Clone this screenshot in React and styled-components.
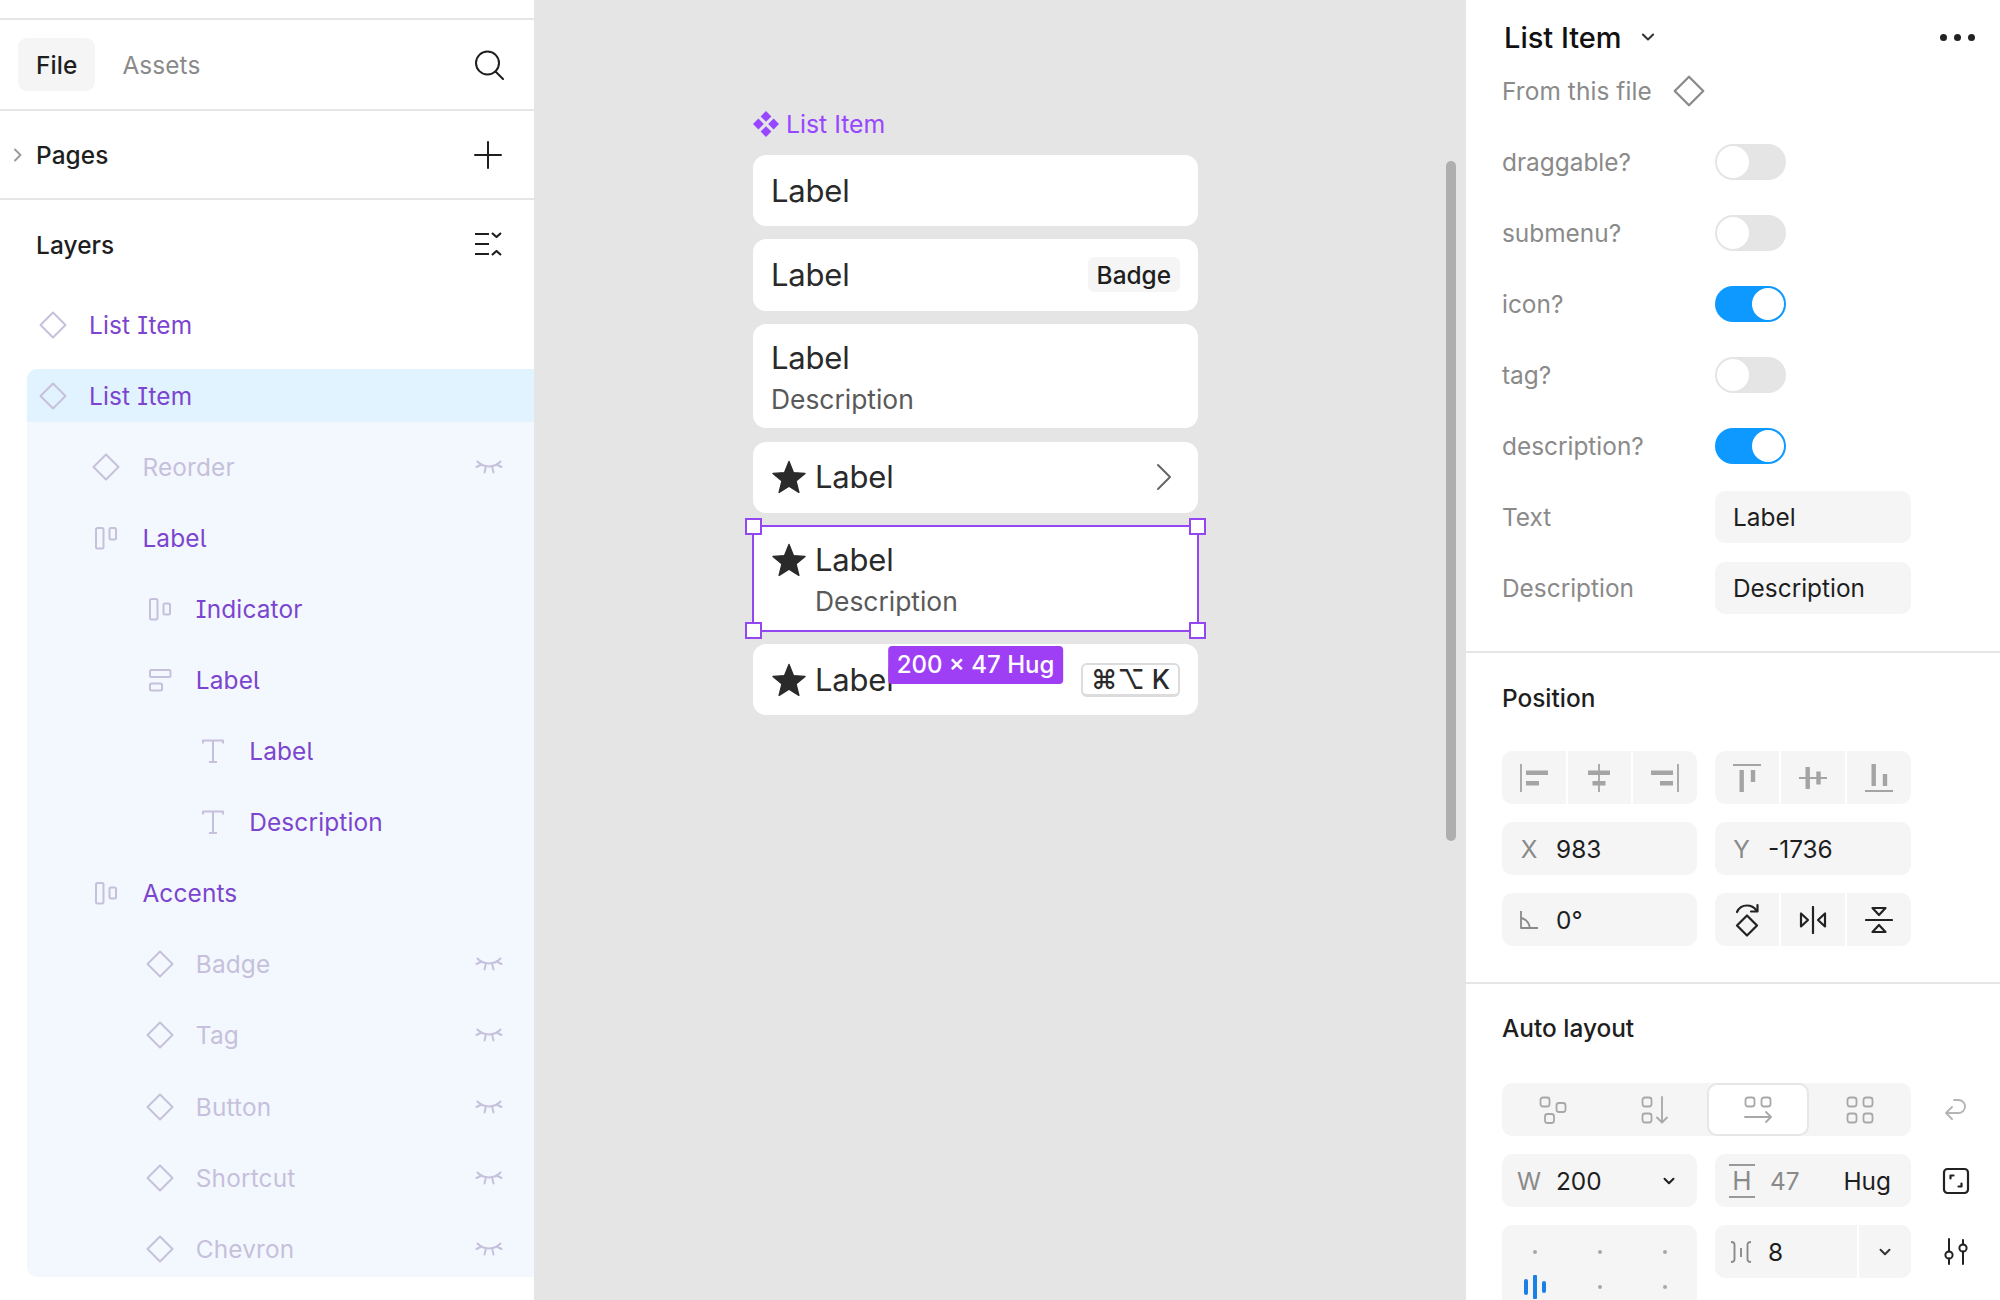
import React from 'react'
import styled, { createGlobalStyle } from 'styled-components'

const GlobalStyle = createGlobalStyle`
  html, body {
    margin: 0;
    padding: 0;
    background: #fff;
  }
  body {
    font-family: Inter, "Liberation Sans", sans-serif;
    -webkit-font-smoothing: antialiased;
  }
`

const Icon = ({ size = 28, h, vb, children, ...rest }) => (
  <svg
    width={size}
    height={h || size}
    viewBox={vb || `0 0 ${size} ${h || size}`}
    fill="none"
    stroke="currentColor"
    strokeWidth="2"
    strokeLinecap="round"
    strokeLinejoin="round"
    style={{ display: 'block', flex: 'none' }}
    {...rest}
  >
    {children}
  </svg>
)

const Diamond = ({ size = 28 }) => (
  <Icon size={28} vb="0 0 28 28" width={size} height={size}>
    <path d="M14 1.5 26.5 14 14 26.5 1.5 14Z" />
  </Icon>
)
const RowFrame = ({ top }) => (
  <Icon size={28} strokeWidth="2">
    <rect x="4" y="4" width="7.5" height="20.5" rx="1.5" />
    <rect x="17.5" y={top ? 4 : 8.5} width="6.5" height={top ? 11.5 : 11} rx="1.5" />
  </Icon>
)
const ColFrame = () => (
  <Icon size={28} strokeWidth="2">
    <rect x="4" y="4" width="20.5" height="7" rx="1.5" />
    <rect x="4" y="17.5" width="12" height="7" rx="1.5" />
  </Icon>
)
const TextIcon = () => (
  <Icon size={28} strokeWidth="2" strokeLinecap="butt">
    <path d="M4 6.5V3.5h20v3M14 3.5v21M10 25h8" />
  </Icon>
)
const EyeClosed = () => (
  <Icon size={28} h={16} strokeWidth="2">
    <path d="M2.5 2.5c6 6.5 17 6.5 23 0" />
    <path d="M1.5 8 6.5 5.5M26.5 8 21.5 5.5M9.5 13.5l1.2-5M18.5 13.5l-1.2-5" />
  </Icon>
)
const Star = () => (
  <svg width="36" height="36" viewBox="0 0 36 36" style={{ display: 'block', flex: 'none' }}>
    <path
      d="M18 2.5 22.4 13.6 34 14.4 25 22 27.9 33.4 18 27.2 8.1 33.4 11 22 2 14.4 13.6 13.6Z"
      fill="#2a2a2a"
      stroke="#2a2a2a"
      strokeWidth="1.4"
      strokeLinejoin="round"
    />
  </svg>
)
const Chevron = ({ size = 12, w = 2 }) => (
  <Icon size={size} strokeWidth={w}>
    <path d={`M${size * 0.18} ${size * 0.34} ${size / 2} ${size * 0.66} ${size * 0.82} ${size * 0.34}`} />
  </Icon>
)

const AlignIcon = ({ kind }) => {
  const thin = {
    left: 'M1 0v28',
    center: 'M14 0v28',
    right: 'M27 0v28',
    top: 'M0 1h28',
    middle: 'M0 14h28',
    bottom: 'M0 27h28',
  }[kind]
  const bars = {
    left: 'M6 8.7h22M6 19.3h13',
    center: 'M3 8.7h22M7.5 19.3h13',
    right: 'M0 8.7h22M9 19.3h13',
    top: 'M8.7 6v22M20 6v12',
    middle: 'M8.7 3v22M19.5 7.5v13',
    bottom: 'M8.7 0v22M20 10v12',
  }[kind]
  return (
    <Icon size={28} strokeLinecap="butt">
      <path d={thin} strokeWidth="1.8" />
      <path d={bars} strokeWidth="4.4" />
    </Icon>
  )
}

const RotateIcon = () => (
  <Icon size={24} h={34} strokeWidth="2.2">
    <path d="M12 12.5 22 22.5 12 32.5 2 22.5Z" />
    <path d="M2 9C4 4.5 7 2.5 12 2.5c4 0 7 1.5 9.5 5" />
    <path d="M22.5 2v6.5H16" />
  </Icon>
)
const FlipH = () => (
  <Icon size={28} strokeWidth="2.2">
    <path d="M14 1v26" />
    <path d="M2 7.5v13L9 14ZM26 7.5v13L19 14Z" />
  </Icon>
)
const FlipV = () => (
  <Icon size={28} strokeWidth="2.2">
    <path d="M1 14h26" />
    <path d="M7.5 2h13L14 9ZM7.5 26h13L14 19Z" />
  </Icon>
)
const AngleIcon = () => (
  <Icon size={20} strokeWidth="1.8" strokeLinecap="butt">
    <path d="M2 1v17h17M2 8c5 1 8 5 9 10" />
  </Icon>
)
const Squares = ({ items, extra }) => (
  <Icon size={28} strokeWidth="1.8">
    {items.map(([x, y], i) => (
      <rect key={i} x={x} y={y} width="9" height="9" rx="2.5" />
    ))}
    {extra && <path d={extra} />}
  </Icon>
)
const ResizeIcon = () => (
  <Icon size={28} strokeWidth="2.2">
    <rect x="2" y="2" width="24" height="24" rx="3.5" />
    <path d="M8.5 11.5V8.5h3M19.5 16.5v3h-3" />
  </Icon>
)
const SlidersIcon = () => (
  <Icon size={28} strokeWidth="2">
    <circle cx="7" cy="17" r="3.6" />
    <circle cx="21" cy="10" r="3.6" />
    <path d="M7 1v12.4M7 20.6V26M21 2v4.4M21 13.6V26" />
  </Icon>
)
const GapIcon = () => (
  <Icon size={24} strokeWidth="1.9" strokeLinecap="butt">
    <path d="M2 2c3 0 3.5 1 3.5 3v14c0 2-.5 3-3.5 3M22 2c-3 0-3.5 1-3.5 3v14c0 2 .5 3 3.5 3M12 8v9" />
  </Icon>
)
const AlignActive = () => (
  <svg width="24" height="24" viewBox="0 0 24 24" style={{ display: 'block' }}>
    <g stroke="#1a80e5" strokeLinecap="round" fill="none">
      <path d="M3 6v12" strokeWidth="4" />
      <path d="M12 1.5v21" strokeWidth="4" />
      <path d="M21 8v8" strokeWidth="4" />
    </g>
  </svg>
)

const Page = styled.div`
  display: grid;
  grid-template-columns: 534px 932px 534px;
  width: 2000px;
  height: 1300px;
  overflow: hidden;
`

/* left panel */
const LeftPanel = styled.aside`
  display: flex;
  flex-direction: column;
  background: #fff;
  font-size: 24.4px;
  color: #1e1e1e;
`
const TopStrip = styled.div`
  height: 18px;
  border-bottom: 2px solid #e6e6e6;
`
const TabsBar = styled.div`
  display: flex;
  align-items: center;
  height: 89px;
  padding: 0 30px 0 18px;
  border-bottom: 2px solid #e6e6e6;
`
const Tab = styled.div`
  display: flex;
  align-items: center;
  height: 53px;
  padding: 0 18px;
  border-radius: 9px;
  font-weight: ${(p) => (p.$active ? 500 : 400)};
  letter-spacing: 0.1px;
  color: ${(p) => (p.$active ? '#1e1e1e' : '#8a8a8a')};
  background: ${(p) => (p.$active ? '#f5f5f5' : 'transparent')};
  margin-right: ${(p) => (p.$active ? '9px' : 0)};
`
const Spacer = styled.div`
  flex: 1;
`
const SectionBar = styled.div`
  display: flex;
  align-items: center;
  height: ${(p) => p.$h}px;
  padding: 0 32px 0 36px;
  font-weight: 500;
  letter-spacing: 0.1px;
  border-bottom: ${(p) => (p.$line ? '2px solid #e6e6e6' : 'none')};
  position: relative;
`
const Caret = styled.span`
  position: absolute;
  left: 11px;
  top: 50%;
  transform: translateY(-50%);
  color: #9a9a9a;
`
const Tree = styled.div`
  display: flex;
  flex-direction: column;
  gap: 18.1px;
  padding: 9px 0 0 27px;
`
const Row = styled.div`
  display: flex;
  align-items: center;
  gap: 22px;
  height: 53px;
  padding-left: ${(p) => 12 + (p.$level || 0) * 53.4}px;
  padding-right: 31px;
  font-feature-settings: 'cv05', 'cv08';
  letter-spacing: 0.15px;
  color: ${(p) => (p.$hidden ? '#c6c0dc' : '#7c45cf')};
  background: ${(p) => (p.$selected ? '#e1f3fe' : 'transparent')};
  border-radius: ${(p) => (p.$selected ? '10px 0 0 0' : 0)};
`
const RowIcon = styled.span`
  color: #c6c0dc;
  flex: none;
`
const RowLabel = styled.span`
  flex: 1;
`
const SelectedGroup = styled.div`
  display: flex;
  flex-direction: column;
  gap: 18.1px;
  padding-bottom: 2px;
  background: #f3f8fe;
  border-radius: 10px 0 0 10px;
`

/* canvas */
const Canvas = styled.main`
  position: relative;
  background: #e5e5e5;
  padding: 108px 0 0 219px;
`
const Scrollbar = styled.div`
  position: absolute;
  left: 912px;
  top: 161px;
  width: 10px;
  height: 680px;
  border-radius: 5px;
  background: #aeaeae;
`
const FrameTitle = styled.div`
  display: flex;
  align-items: center;
  gap: 7px;
  height: 32px;
  margin-bottom: 15px;
  font-size: 24.8px;
  color: #9747ff;
  svg {
    display: block;
  }
`
const CardList = styled.div`
  display: flex;
  flex-direction: column;
  gap: 13.34px;
  width: 445px;
`
const Card = styled.div`
  position: relative;
  z-index: ${(p) => (p.$selected ? 2 : 'auto')};
  display: flex;
  align-items: ${(p) => (p.$tall ? 'flex-start' : 'center')};
  gap: 8px;
  height: ${(p) => (p.$tall ? 104.5 : 71.12)}px;
  padding: ${(p) => (p.$tall ? '12px 18px' : '0 18px')};
  box-sizing: border-box;
  background: #fff;
  border-radius: 13px;
  color: #2a2a2a;
`
const CardText = styled.div`
  display: flex;
  flex-direction: column;
  flex: 1;
`
const CardLabel = styled.div`
  font-size: 31px;
  line-height: 44px;
  letter-spacing: -0.2px;
`
const CardDesc = styled.div`
  font-size: 26.4px;
  line-height: 39px;
  color: #595959;
`
const StarSlot = styled.div`
  padding-top: ${(p) => (p.$tall ? 4 : 0)}px;
`
const Badge = styled.div`
  display: flex;
  align-items: center;
  height: 35px;
  padding: 0 9px;
  border-radius: 6px;
  background: #f5f5f5;
  color: #1e1e1e;
  font-size: 24.4px;
  font-weight: 500;
`
const Shortcut = styled.div`
  display: flex;
  align-items: center;
  height: 34px;
  box-sizing: border-box;
  padding: 0 8px;
  border: 2px solid #dcdcdc;
  border-bottom-width: 3px;
  border-radius: 6px;
  color: #2a2a2a;
  font-size: 26.6px;
  font-weight: 500;
  white-space: nowrap;
  font-family: Inter, "DejaVu Sans", sans-serif;
`
const ChevronRight = styled.span`
  color: #666;
  margin-right: 8px;
`
const SelectionBox = styled.div`
  position: absolute;
  inset: -1px;
  border: 2.4px solid #9447f0;
  pointer-events: none;
`
const Handle = styled.span`
  position: absolute;
  width: 17px;
  height: 17px;
  box-sizing: border-box;
  background: #fff;
  border: 2.4px solid #9447f0;
  left: ${(p) => (p.$right ? 'auto' : '-9px')};
  right: ${(p) => (p.$right ? '-9px' : 'auto')};
  top: ${(p) => (p.$bottom ? 'auto' : '-9px')};
  bottom: ${(p) => (p.$bottom ? '-9px' : 'auto')};
`
const SizeTag = styled.div`
  position: absolute;
  top: calc(100% + 16px);
  left: 50%;
  transform: translateX(-50%);
  display: flex;
  align-items: center;
  height: 38px;
  padding: 0 9px;
  white-space: nowrap;
  border-radius: 4px;
  background: #9f3ff5;
  color: #fff;
  font-size: 24px;
  font-weight: 500;
`

/* right panel */
const RightPanel = styled.aside`
  display: flex;
  flex-direction: column;
  background: #fff;
  font-size: 24.4px;
  color: #1e1e1e;
`
const PropsSection = styled.section`
  padding: 0 35px 37px 36px;
  border-bottom: 2px solid #e6e6e6;
`
const TitleRow = styled.div`
  display: flex;
  align-items: center;
  height: 74px;
  margin-left: 2px;
  margin-right: -10px;
  font-size: 29px;
  font-weight: 500;
  color: #111;
`
const TitleChevron = styled.span`
  margin-left: 18px;
  color: #333;
`
const Dots = styled.div`
  display: flex;
  gap: 7px;
  margin-left: auto;
  span {
    width: 7px;
    height: 7px;
    border-radius: 50%;
    background: #222;
  }
`
const FromRow = styled.div`
  display: flex;
  align-items: center;
  gap: 21px;
  height: 34px;
  margin-bottom: 28px;
  color: #8a8a8a;
  letter-spacing: 0.1px;
`
const PropList = styled.div`
  display: flex;
  flex-direction: column;
  gap: 19px;
`
const PropRow = styled.div`
  display: grid;
  grid-template-columns: 213px 196px;
  align-items: center;
  height: 52px;
  color: #8a8a8a;
`
const Toggle = styled.div`
  display: flex;
  justify-content: ${(p) => (p.$on ? 'flex-end' : 'flex-start')};
  align-items: center;
  width: 71px;
  height: 36px;
  padding: 0 2px;
  box-sizing: border-box;
  border-radius: 18px;
  background: ${(p) => (p.$on ? '#0d99ff' : '#e5e5e5')};
`
const Knob = styled.span`
  width: 32px;
  height: 32px;
  border-radius: 50%;
  background: #fff;
`
const Input = styled.div`
  display: flex;
  align-items: center;
  height: 52px;
  padding: 0 18px;
  border-radius: 10px;
  background: #f5f5f5;
  color: #1e1e1e;
`
const ToolSection = styled.section`
  padding: ${(p) => p.$pt}px 0 ${(p) => p.$pb}px 36px;
  border-bottom: ${(p) => (p.$line ? '2px solid #e6e6e6' : 'none')};
`
const SectionTitle = styled.div`
  height: 30px;
  line-height: 30px;
  font-weight: 500;
  color: #1e1e1e;
  margin-bottom: ${(p) => p.$mb}px;
`
const ToolGrid = styled.div`
  display: grid;
  grid-template-columns: 195px 196px 54px;
  column-gap: 18px;
  row-gap: 18px;
  align-items: start;
`
const Group = styled.div`
  display: grid;
  grid-template-columns: repeat(3, 1fr);
  gap: 2px;
  height: 53px;
  border-radius: 10px;
  overflow: hidden;
  color: ${(p) => (p.$dark ? '#222' : '#a4a4a4')};
`
const GroupCell = styled.div`
  display: flex;
  align-items: center;
  justify-content: center;
  background: #f5f5f5;
`
const Field = styled.div`
  display: flex;
  align-items: center;
  height: 53px;
  padding-left: ${(p) => p.$pl || 0}px;
  padding-right: ${(p) => p.$pr || 0}px;
  border-radius: 10px;
  background: #f5f5f5;
  color: #1e1e1e;
`
const FieldPrefix = styled.span`
  display: flex;
  justify-content: center;
  width: ${(p) => p.$w}px;
  flex: none;
  color: #8a8a8a;
`
const Muted = styled.span`
  color: #8a8a8a;
`
const FieldSuffix = styled.span`
  margin-left: auto;
`
const HeightMark = styled.span`
  display: flex;
  justify-content: center;
  align-items: center;
  width: 26px;
  height: 30px;
  flex: none;
  margin: 0 15px 0 14px;
  font-size: 26px;
  color: #8a8a8a;
  border-top: 2px solid #9a9a9a;
  border-bottom: 2px solid #9a9a9a;
`
const SideIcon = styled.div`
  display: flex;
  align-items: center;
  justify-content: center;
  height: 53px;
  color: ${(p) => (p.$muted ? '#b4b4b4' : '#222')};
`
const Segmented = styled.div`
  grid-column: 1 / span 2;
  display: grid;
  grid-template-columns: repeat(4, 1fr);
  height: 53px;
  border-radius: 10px;
  background: #f5f5f5;
  color: #a8a8a8;
`
const Segment = styled.div`
  display: flex;
  align-items: center;
  justify-content: center;
  box-sizing: border-box;
  border-radius: 10px;
  background: ${(p) => (p.$active ? '#fff' : 'transparent')};
  border: ${(p) => (p.$active ? '2px solid #e6e6e6' : 'none')};
`
const Matrix = styled.div`
  display: grid;
  grid-template-columns: repeat(3, 1fr);
  grid-auto-rows: 35px;
  height: 124px;
  box-sizing: border-box;
  padding: 9px 0 10px;
  border-radius: 10px;
  background: #f5f5f5;
`
const MatrixCell = styled.div`
  display: flex;
  align-items: center;
  justify-content: center;
`
const Dot = styled.span`
  width: 4px;
  height: 4px;
  border-radius: 50%;
  background: #a8a8a8;
`
const GapField = styled.div`
  display: grid;
  grid-template-columns: 1fr 52px;
  column-gap: 2px;
  height: 53px;
  border-radius: 10px;
  overflow: hidden;
`
const GapMain = styled.div`
  display: flex;
  align-items: center;
  padding-left: 14px;
  gap: 15px;
  background: #f5f5f5;
  color: #1e1e1e;
`
const GapMark = styled.span`
  color: #8a8a8a;
`
const GapMenu = styled.div`
  display: flex;
  align-items: center;
  justify-content: center;
  background: #f5f5f5;
  color: #333;
`
const WChevron = styled(FieldSuffix)`
  margin-right: 5px;
`

const layers = [
  { level: 1, name: 'Reorder', icon: 'diamond', hidden: true },
  { level: 1, name: 'Label', icon: 'rowTop' },
  { level: 2, name: 'Indicator', icon: 'row' },
  { level: 2, name: 'Label', icon: 'col' },
  { level: 3, name: 'Label', icon: 'text' },
  { level: 3, name: 'Description', icon: 'text' },
  { level: 1, name: 'Accents', icon: 'row' },
  { level: 2, name: 'Badge', icon: 'diamond', hidden: true },
  { level: 2, name: 'Tag', icon: 'diamond', hidden: true },
  { level: 2, name: 'Button', icon: 'diamond', hidden: true },
  { level: 2, name: 'Shortcut', icon: 'diamond', hidden: true },
  { level: 2, name: 'Chevron', icon: 'diamond', hidden: true },
]

const layerIcon = (kind) => {
  if (kind === 'rowTop') return <RowFrame top />
  if (kind === 'row') return <RowFrame />
  if (kind === 'col') return <ColFrame />
  if (kind === 'text') return <TextIcon />
  return <Diamond />
}

const LayerRow = ({ level, name, icon, hidden, selected }) => (
  <Row $level={level} $hidden={hidden} $selected={selected}>
    <RowIcon>{layerIcon(icon)}</RowIcon>
    <RowLabel>{name}</RowLabel>
    {hidden && <EyeClosed />}
  </Row>
)

const props = [
  { name: 'draggable?', on: false },
  { name: 'submenu?', on: false },
  { name: 'icon?', on: true },
  { name: 'tag?', on: false },
  { name: 'description?', on: true },
]

const Left = () => (
  <LeftPanel>
    <TopStrip />
    <TabsBar>
      <Tab $active>File</Tab>
      <Tab>Assets</Tab>
      <Spacer />
      <Icon size={30} strokeWidth="2">
        <circle cx="13.5" cy="13" r="11.5" />
        <path d="M21.5 21.5 29 29" />
      </Icon>
    </TabsBar>
    <SectionBar $h={87} $line>
      <Caret>
        <Icon size={14} strokeWidth="1.9">
          <path d="M4 1.5l5.5 5.5L4 12.5" />
        </Icon>
      </Caret>
      Pages
      <Spacer />
      <Icon size={28} strokeWidth="2">
        <path d="M14 1v26M1 14h26" />
      </Icon>
    </SectionBar>
    <SectionBar $h={89}>
      Layers
      <Spacer />
      <Icon size={28} strokeWidth="2.2" strokeLinecap="butt">
        <path d="M1 3h14M1 13h14M1 23h14" />
        <path d="M18 2l4.5 4L27 2M18 24l4.5-4 4.5 4" />
      </Icon>
    </SectionBar>
    <Tree>
      <LayerRow name="List Item" icon="diamond" />
      <SelectedGroup>
        <LayerRow name="List Item" icon="diamond" selected />
        {layers.map((l, i) => (
          <LayerRow key={i} {...l} />
        ))}
      </SelectedGroup>
    </Tree>
  </LeftPanel>
)

const Middle = () => (
  <Canvas>
    <Scrollbar />
    <FrameTitle>
      <svg width="26" height="26" viewBox="0 0 24 24" fill="#9747ff">
        <path d="M12 0 17 5 12 10 7 5ZM12 14 17 19 12 24 7 19ZM5 7 10 12 5 17 0 12ZM19 7 24 12 19 17 14 12Z" />
      </svg>
      List Item
    </FrameTitle>
    <CardList>
      <Card>
        <CardText>
          <CardLabel>Label</CardLabel>
        </CardText>
      </Card>
      <Card>
        <CardText>
          <CardLabel>Label</CardLabel>
        </CardText>
        <Badge>Badge</Badge>
      </Card>
      <Card $tall>
        <CardText>
          <CardLabel>Label</CardLabel>
          <CardDesc>Description</CardDesc>
        </CardText>
      </Card>
      <Card>
        <Star />
        <CardText>
          <CardLabel>Label</CardLabel>
        </CardText>
        <ChevronRight>
          <Icon size={16} h={28} strokeWidth="2">
            <path d="M2 2l12 12L2 26" />
          </Icon>
        </ChevronRight>
      </Card>
      <Card $tall $selected>
        <StarSlot $tall>
          <Star />
        </StarSlot>
        <CardText>
          <CardLabel>Label</CardLabel>
          <CardDesc>Description</CardDesc>
        </CardText>
        <SelectionBox>
          <Handle />
          <Handle $right />
          <Handle $bottom />
          <Handle $right $bottom />
          <SizeTag>200 × 47 Hug</SizeTag>
        </SelectionBox>
      </Card>
      <Card>
        <Star />
        <CardText>
          <CardLabel>Label</CardLabel>
        </CardText>
        <Shortcut>⌘⌥ K</Shortcut>
      </Card>
    </CardList>
  </Canvas>
)

const Right = () => (
  <RightPanel>
    <PropsSection>
      <TitleRow>
        List Item
        <TitleChevron>
          <Chevron size={16} />
        </TitleChevron>
        <Dots>
          <span />
          <span />
          <span />
        </Dots>
      </TitleRow>
      <FromRow>
        From this file
        <Diamond size={32} />
      </FromRow>
      <PropList>
        {props.map((p) => (
          <PropRow key={p.name}>
            {p.name}
            <Toggle $on={p.on}>
              <Knob />
            </Toggle>
          </PropRow>
        ))}
        <PropRow>
          Text
          <Input>Label</Input>
        </PropRow>
        <PropRow>
          Description
          <Input>Description</Input>
        </PropRow>
      </PropList>
    </PropsSection>
    <ToolSection $pt={30} $pb={36} $line>
      <SectionTitle $mb={38}>Position</SectionTitle>
      <ToolGrid>
        <Group>
          <GroupCell><AlignIcon kind="left" /></GroupCell>
          <GroupCell><AlignIcon kind="center" /></GroupCell>
          <GroupCell><AlignIcon kind="right" /></GroupCell>
        </Group>
        <Group>
          <GroupCell><AlignIcon kind="top" /></GroupCell>
          <GroupCell><AlignIcon kind="middle" /></GroupCell>
          <GroupCell><AlignIcon kind="bottom" /></GroupCell>
        </Group>
        <span />
        <Field>
          <FieldPrefix $w={54}>X</FieldPrefix>
          983
        </Field>
        <Field>
          <FieldPrefix $w={53}>Y</FieldPrefix>
          -1736
        </Field>
        <span />
        <Field>
          <FieldPrefix $w={54}>
            <Muted><AngleIcon /></Muted>
          </FieldPrefix>
          0°
        </Field>
        <Group $dark>
          <GroupCell><RotateIcon /></GroupCell>
          <GroupCell><FlipH /></GroupCell>
          <GroupCell><FlipV /></GroupCell>
        </Group>
      </ToolGrid>
    </ToolSection>
    <ToolSection $pt={29} $pb={0}>
      <SectionTitle $mb={40}>Auto layout</SectionTitle>
      <ToolGrid>
        <Segmented>
          <Segment>
            <Squares items={[[1.5, 1.5], [17.5, 7], [6, 18]]} />
          </Segment>
          <Segment>
            <Squares items={[[1.5, 1.5], [1.5, 17.5]]} extra="M21 1v25.5M16 21.5l5 5 5-5" />
          </Segment>
          <Segment $active>
            <Squares items={[[1.5, 1.5], [17.5, 1.5]]} extra="M1 21h26M22 16l5 5-5 5" />
          </Segment>
          <Segment>
            <Squares items={[[1.5, 1.5], [17.5, 1.5], [1.5, 17.5], [17.5, 17.5]]} />
          </Segment>
        </Segmented>
        <SideIcon $muted>
          <Icon size={24} strokeWidth="1.9">
            <path d="M10 2h4.5a6.5 6.5 0 0 1 0 13H2M8 9l-6 6 6 6" />
          </Icon>
        </SideIcon>
        <Field $pr={16}>
          <FieldPrefix $w={54}>W</FieldPrefix>
          200
          <WChevron>
            <Chevron size={14} />
          </WChevron>
        </Field>
        <Field $pr={20}>
          <HeightMark>H</HeightMark>
          <Muted>47</Muted>
          <FieldSuffix>Hug</FieldSuffix>
        </Field>
        <SideIcon>
          <ResizeIcon />
        </SideIcon>
        <Matrix>
          <MatrixCell><Dot /></MatrixCell>
          <MatrixCell><Dot /></MatrixCell>
          <MatrixCell><Dot /></MatrixCell>
          <MatrixCell><AlignActive /></MatrixCell>
          <MatrixCell><Dot /></MatrixCell>
          <MatrixCell><Dot /></MatrixCell>
          <MatrixCell><Dot /></MatrixCell>
          <MatrixCell><Dot /></MatrixCell>
          <MatrixCell><Dot /></MatrixCell>
        </Matrix>
        <GapField>
          <GapMain>
            <GapMark><GapIcon /></GapMark>
            8
          </GapMain>
          <GapMenu>
            <Chevron size={14} />
          </GapMenu>
        </GapField>
        <SideIcon>
          <SlidersIcon />
        </SideIcon>
      </ToolGrid>
    </ToolSection>
  </RightPanel>
)

const App = () => (
  <>
    <GlobalStyle />
    <Page>
      <Left />
      <Middle />
      <Right />
    </Page>
  </>
)

export default App
